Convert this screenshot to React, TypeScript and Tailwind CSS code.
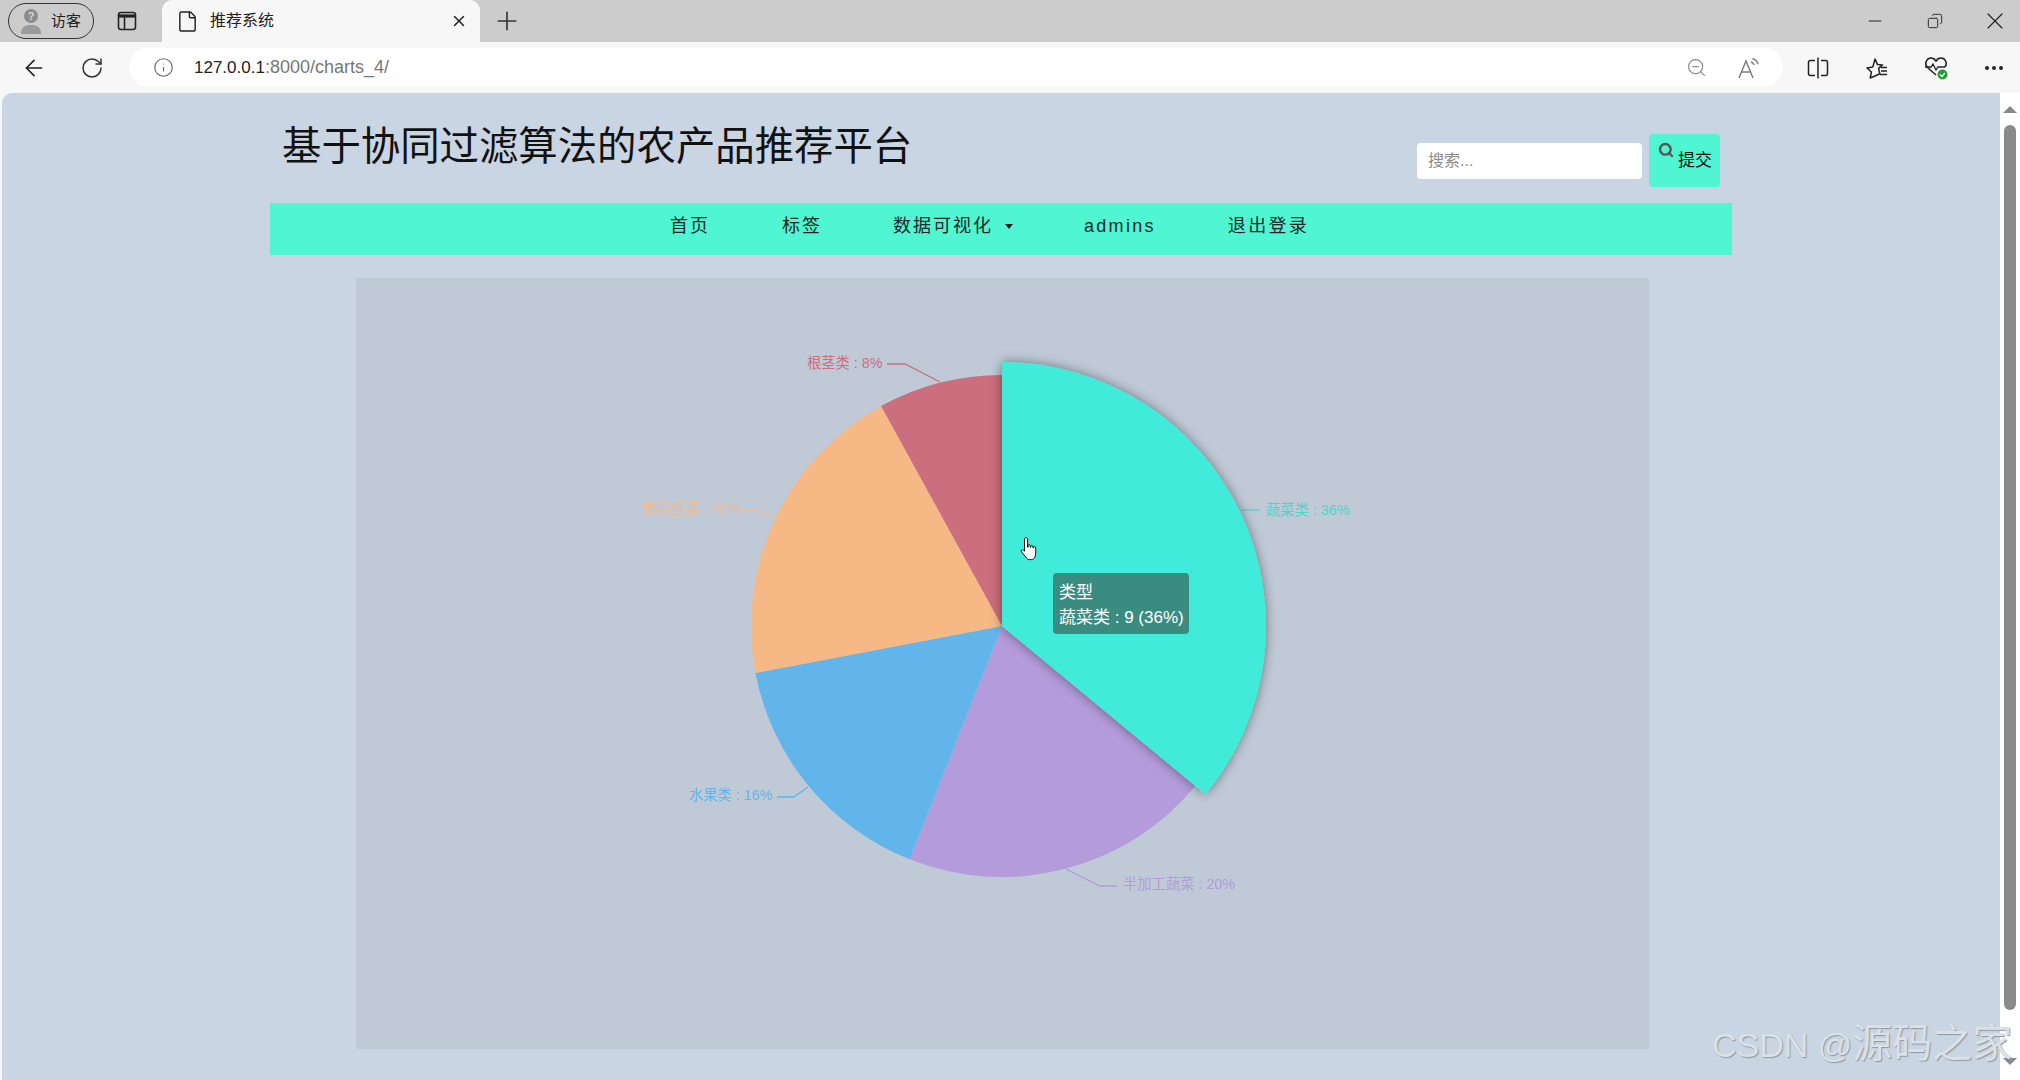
import { ArrowLeft, RotateCw, Info, ZoomOut, X, Plus, Minus, Copy, File, Ellipsis, Search } from 'lucide-react';

const CJK = 'font-["Liberation_Sans","Noto_Sans_CJK_SC",sans-serif]';

// pie slices in degrees, clockwise from 12 o'clock
const cx = 646;
const cy = 348;
const slices = [
  { from: 129.6, to: 201.6, color: '#b49bdb' },
  { from: 201.6, to: 259.2, color: '#62b5ea' },
  { from: 259.2, to: 331.2, color: '#f6b885' },
  { from: 331.2, to: 360, color: '#cb6e7e' },
];

const slicePath = (from: number, to: number, r: number) => {
  const a = (from * Math.PI) / 180;
  const b = (to * Math.PI) / 180;
  const large = to - from > 180 ? 1 : 0;
  const x1 = cx + r * Math.sin(a);
  const y1 = cy - r * Math.cos(a);
  const x2 = cx + r * Math.sin(b);
  const y2 = cy - r * Math.cos(b);
  return `M${cx} ${cy}L${x1} ${y1}A${r} ${r} 0 ${large} 1 ${x2} ${y2}Z`;
};

// chart labels, coordinates inside the chart panel
const labels = [
  { text: '根茎类 : 8%', x: 451, y: 90, line: '531,86 549,86 584,104', color: '#cb6e7e', opacity: 1 },
  { text: '前果坚果 : 20%', x: 286, y: 236, line: '388,233 402,233 417,239', color: '#f6b885', opacity: 0.85 },
  { text: '水果类 : 16%', x: 333, y: 522, line: '421,519 438,519 452,509', color: '#62b5ea', opacity: 1 },
  { text: '半加工蔬菜 : 20%', x: 767, y: 611, line: '761,608 744,608 710,591', color: '#b49bdb', opacity: 1 },
  { text: '蔬菜类 : 36%', x: 910, y: 237, line: '886,232 904,232', color: '#4fd4c6', opacity: 1 },
];

const PieChart = () => (
  <svg className="w-full h-full" viewBox="0 0 1293 771">
    <defs>
      <filter id="slice-shadow" x="-20%" y="-20%" width="140%" height="140%">
        <feDropShadow dx="0" dy="0" stdDeviation="6" floodColor="#000" floodOpacity="0.45" />
      </filter>
    </defs>
    {labels.map((l) => (
      <g key={l.text} opacity={l.opacity}>
        <polyline points={l.line} fill="none" stroke={l.color} strokeWidth="1.3" />
        <text x={l.x} y={l.y} fill={l.color} fontSize="14.3">
          {l.text}
        </text>
      </g>
    ))}
    {slices.map((s) => (
      <path key={s.from} d={slicePath(s.from, s.to, 251)} fill={s.color} />
    ))}
    <path d={slicePath(0, 129.6, 264)} fill="#40ecd9" filter="url(#slice-shadow)" />
  </svg>
);

const HandCursor = () => (
  <svg className="absolute left-[664px] top-[258px]" width="20" height="26" viewBox="0 0 20 26">
    <path
      d="M6 1.5c1 0 1.600.7 1.600 1.700v8l.6-.1V9.300c0-.9 1.900-.9 2 0v2l.6.1v-1.200c0-.9 1.900-.9 2 0v1.500l.6.1v-.7c0-.9 2.100-.9 2.200.2.300 3.300.3 6.400-.5 9-.5 1.800-1.800 3.300-3.600 3.300H9.500c-1.500 0-2.500-.8-3.400-2.100L1.400 15.600c-.9-1.300.7-2.700 1.900-1.600l1.200 1.300V3.200c0-1 .6-1.700 1.500-1.700Z"
      fill="#fff"
      stroke="#111"
      strokeWidth="1"
    />
  </svg>
);

const ProfileIcon = () => (
  <svg width="24" height="28" viewBox="0 0 24 28">
    <circle cx="12" cy="9" r="7" fill="#8b8b8b" />
    <path d="M2 27c0-7 4-9 10-9s10 2 10 9Z" fill="#9a9a9a" />
    <text x="12" y="13" textAnchor="middle" fontSize="11" fontWeight="700" fill="#d8d8d8">?</text>
  </svg>
);

const VerticalTabsIcon = () => (
  <svg width="20" height="20" viewBox="0 0 20 20" fill="none" stroke="#222" strokeWidth="1.600">
    <rect x="1.500" y="1.500" width="17" height="17" rx="2.500" />
    <path d="M2 5h16" strokeWidth="3.200" />
    <path d="M7.500 6v12" />
  </svg>
);

const SplitScreenIcon = () => (
  <svg width="24" height="24" viewBox="0 0 24 24" fill="none" stroke="#222" strokeWidth="1.500">
    <path d="M9 4.500H4.500A2 2 0 0 0 2.500 6.500v11a2 2 0 0 0 2 2H9M15 4.500h4.500a2 2 0 0 1 2 2v11a2 2 0 0 1-2 2H15" />
    <path d="M12 1.500v21" />
  </svg>
);

const ReadAloudIcon = () => (
  <svg width="24" height="24" viewBox="0 0 24 24" fill="none" stroke="#7f7f7f" strokeWidth="1.500">
    <path d="M2 22 9 5l7 17M4.500 16h9" />
    <path d="M14 6c1.600.5 2.600 1.500 3 3M15.500 2.500c2.800.8 4.500 2.500 5.500 5.500" />
  </svg>
);

const FavoritesIcon = () => (
  <svg width="24" height="24" viewBox="0 0 24 24" fill="none" stroke="#222" strokeWidth="1.500">
    <path d="M10 3l2.400 5.400 5.100.5-3.900 3.500 1.200 5.300L10 20l-4.800 2 1.200-6-4.400-4 5.800-.9Z" strokeLinejoin="round" />
    <path d="M16 11.500h6M16 15h6M15 18.500h7" />
  </svg>
);

const HealthIcon = () => (
  <svg width="26" height="26" viewBox="0 0 26 26" fill="none">
    <path
      d="M13 20 4 12C1 8 4 3 8 3c2.300 0 4 1.300 5 3 1-1.700 2.700-3 5-3 4 0 7 5 4 9"
      stroke="#222"
      strokeWidth="1.500"
    />
    <path d="M2 12h6l2-3 3 6 2-3h7" stroke="#222" strokeWidth="1.300" />
    <circle cx="19.500" cy="19.500" r="5" fill="#1f9d3a" />
    <path d="m17 19.500 2 2 3-3.500" stroke="#fff" strokeWidth="1.300" />
  </svg>
);

export default function App() {
  return (
    <div className={`relative w-[2020px] h-[1080px] overflow-hidden flex flex-col bg-[#f7f7f7] ${CJK}`}>
      {/* Tab strip */}
      <div className="h-[42px] bg-[#cccccc] flex items-center pl-2 shrink-0">
        <div className="w-[86px] h-[36px] rounded-full border-[1.5px] border-[#333] flex items-center pl-[10px] gap-[8px]">
          <ProfileIcon />
          <span className="text-[15px] text-[#222]">访客</span>
        </div>
        <div className="ml-[23px]">
          <VerticalTabsIcon />
        </div>
        <div className="ml-[25px] w-[318px] h-[42px] bg-[#f7f7f7] rounded-t-[10px] flex items-center pl-[14px] pr-[12px]">
          <File size={23} strokeWidth={1.5} className="text-[#222]" />
          <span className="ml-[11px] text-[16px] text-[#222]">推荐系统</span>
          <X size={18} strokeWidth={2} className="ml-auto text-[#222]" />
        </div>
        <Plus size={30} strokeWidth={1.3} className="ml-[12px] text-[#333]" />
        <div className="ml-auto flex items-center">
          <Minus size={20} strokeWidth={1.2} className="text-[#222]" />
          <Copy size={16} strokeWidth={1.4} className="ml-[42px] text-[#222] -scale-x-100" />
          <X size={28} strokeWidth={1} className="ml-[38px] mr-[11px] text-[#222]" />
        </div>
      </div>

      {/* Address bar */}
      <div className="h-[51px] flex items-center shrink-0">
        <ArrowLeft size={26} strokeWidth={1.5} className="ml-[21px] text-[#222]" />
        <RotateCw size={24} strokeWidth={1.5} className="ml-[33px] text-[#333]" />
        <div className="ml-[25px] w-[1654px] h-[39px] bg-white rounded-full flex items-center pl-[24px]">
          <Info size={21} strokeWidth={1.3} className="text-[#666]" />
          <span className="ml-[20px] text-[17px] text-[#222]">127.0.0.1</span>
          <span className="text-[18px] text-[#777]">:8000/charts_4/</span>
          <ZoomOut size={21} strokeWidth={1.4} className="ml-auto text-[#8a8a8a]" />
          <div className="ml-[30px] mr-[22px]">
            <ReadAloudIcon />
          </div>
        </div>
        <div className="ml-[23px]">
          <SplitScreenIcon />
        </div>
        <div className="ml-[35px]">
          <FavoritesIcon />
        </div>
        <div className="ml-[34px]">
          <HealthIcon />
        </div>
        <Ellipsis size={24} strokeWidth={2} className="ml-[33px] text-[#222]" />
      </div>

      {/* Page */}
      <div className="flex-1 flex min-h-0">
        <div className="relative flex-1 ml-[2px] rounded-tl-[10px] bg-[#c9d5e3] overflow-hidden">
          <div className="ml-[268px] w-[1462px]">
            <div className="h-[110px] flex">
              <h1 className="ml-[12px] mt-[25px] text-[39.4px] leading-[56px] text-[#111]">基于协同过滤算法的农产品推荐平台</h1>
              <form className="ml-auto mr-[12px] mt-[41px] flex items-start">
                <input
                  placeholder="搜索..."
                  className="mt-[9px] w-[225px] h-[36px] rounded-[4px] bg-white px-[11px] text-[16px] placeholder:text-[#8a8a8a]"
                />
                <button
                  type="button"
                  className="ml-[7px] w-[71px] h-[53px] rounded-[4px] bg-[#50f5d1] relative flex items-center justify-end pr-[8px] pt-[1px] text-[17px] text-[#111]"
                >
                  <Search size={16} strokeWidth={3.5} className="absolute left-[9px] top-[8px] text-[#555]" />
                  提交
                </button>
              </form>
            </div>
            <nav className="h-[52px] bg-[#50f5d1] flex items-center pl-[365px] pb-[5px] text-[18px] tracking-[2px] text-[#1a2a2a]">
              <a className="px-[35px]">首页</a>
              <a className="pl-[37px] pr-[36px]">标签</a>
              <a className="pl-[35px] pr-[34px] flex items-center">
                数据可视化
                <span className="ml-[12px] w-0 h-0 border-x-[4px] border-x-transparent border-t-[5px] border-t-[#222]" />
              </a>
              <a className="pl-[37px] pr-[37px] tracking-[2.300px]">admins</a>
              <a className="pl-[35px] tracking-[2.300px]">退出登录</a>
            </nav>
          </div>
          <div className="relative ml-[354px] mt-[23px] w-[1293px] h-[771px] bg-[#c0cad7]">
            <PieChart />
            <HandCursor />
            <div className="absolute left-[697px] top-[295px] w-[136px] h-[61px] rounded-[4px] bg-[#3b8c80] pl-[6px] pt-[7px] text-[17px] leading-[25px] text-white">
              <div>类型</div>
              <div>蔬菜类 : 9 (36%)</div>
            </div>
          </div>
        </div>

        {/* Scrollbar */}
        <div className="w-[20px] shrink-0 bg-white flex flex-col items-center">
          <span className="mt-[13px] w-0 h-0 border-x-[7px] border-x-transparent border-b-[7px] border-b-[#888]" />
          <div className="mt-[12px] w-[12px] h-[885px] rounded-full bg-[#8a8a8a]" />
          <span className="mt-[48px] w-0 h-0 border-x-[7px] border-x-transparent border-t-[7px] border-t-[#888]" />
        </div>
      </div>

      {/* CSDN watermark, lies over the scrollbar too */}
      <span className="absolute left-[1712px] top-[1019px] text-[34px] leading-[48px] text-[#dbe1e8] whitespace-nowrap [text-shadow:1px_1px_1px_#8f979f]">
        CSDN @<span className="text-[40px]">源码之家</span>
      </span>
    </div>
  );
}
